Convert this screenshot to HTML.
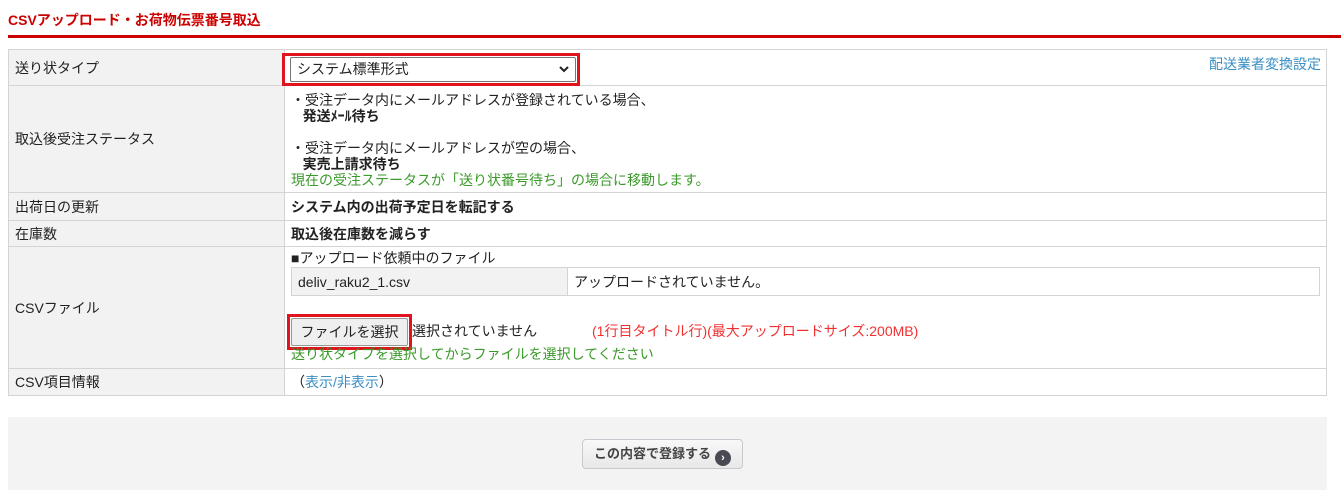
<!DOCTYPE html>
<html><head><meta charset="utf-8"><style>
*{margin:0;padding:0;box-sizing:border-box}
body{width:1341px;height:497px;background:#fff;font-family:"Liberation Sans","Noto Sans CJK JP",sans-serif;font-size:14px;color:#222;position:relative;overflow:hidden}
.a{position:absolute;white-space:nowrap}
.t{left:8px;top:10px;color:#c00;font-weight:bold;font-size:14px}
.rl{left:8px;top:35px;width:1333px;height:3px;background:#c00}
table{position:absolute;left:8px;top:49px;width:1319px;border-collapse:collapse}
td{border:1px solid #d4d4d4;vertical-align:middle;padding:0 6px}
td.l{background:#f2f2f2;width:276px}
.g{color:#3a9a2a}
.b{font-weight:bold}
.inner{border-collapse:collapse;width:100%;position:static}
.inner td{border:1px solid #d4d4d4;height:28px;padding:0 6px}
</style></head><body>
<div class="a t">CSVアップロード・お荷物伝票番号取込</div>
<div class="a rl"></div>
<table>
<tr style="height:36px"><td class="l">送り状タイプ</td><td style="position:relative">
<div class="a" style="left:-3px;top:3px;width:298px;height:33px;border:3px solid #e0141e"></div>
<div class="a" style="left:5px;top:7px;width:286px;height:25px;border:1px solid #767676;border-radius:2px;background:#fff;padding:0 6px;line-height:23px">システム標準形式<svg style="position:absolute;right:6px;top:8px" width="10" height="7" viewBox="0 0 10 7"><path d="M1 1l4 4 4-4" stroke="#222" stroke-width="2" fill="none"/></svg></div>
<div class="a" style="right:5px;top:4px;color:#3a8fc4">配送業者変換設定</div></td></tr>
<tr style="height:107px"><td class="l">取込後受注ステータス</td><td style="line-height:16px;padding-top:2px">
・受注データ内にメールアドレスが登録されている場合、<br>&nbsp;&nbsp;&nbsp;<span class="b">発送ﾒｰﾙ待ち</span><br><br>・受注データ内にメールアドレスが空の場合、<br>&nbsp;&nbsp;&nbsp;<span class="b">実売上請求待ち</span><br><span class="g">現在の受注ステータスが「送り状番号待ち」の場合に移動します。</span></td></tr>
<tr style="height:28px"><td class="l">出荷日の更新</td><td class="b">システム内の出荷予定日を転記する</td></tr>
<tr style="height:26px"><td class="l">在庫数</td><td class="b">取込後在庫数を減らす</td></tr>
<tr style="height:122px"><td class="l">CSVファイル</td><td style="position:relative;vertical-align:top">
<div style="margin-top:3px;line-height:17px">■アップロード依頼中のファイル</div>
<table class="inner"><tr><td style="background:#f2f2f2;width:276px">deliv_raku2_1.csv</td><td>アップロードされていません。</td></tr></table>
<div class="a" style="left:2px;top:67px;width:125px;height:36px;border:3px solid #e0141e"></div>
<div class="a" style="left:6px;top:71px;width:117px;height:28px;border:1px solid #999;border-radius:2px;background:#efefef;text-align:center;line-height:26px">ファイルを選択</div>
<div class="a" style="left:127px;top:74px">選択されていません</div>
<div class="a" style="left:307px;top:74px;color:#f03030">(1行目タイトル行)(最大アップロードサイズ:200MB)</div>
<div class="a g" style="left:6px;top:97px">送り状タイプを選択してからファイルを選択してください</div>
</td></tr>
<tr style="height:27px"><td class="l">CSV項目情報</td><td>（<span style="color:#3a8fc4">表示/非表示</span>）</td></tr>
</table>
<div class="a" style="left:8px;top:417px;width:1319px;height:73px;background:#f3f3f3"></div>
<div class="a" style="left:582px;top:439px;width:161px;height:30px;border:1px solid #c8c8d0;border-radius:4px;background:linear-gradient(#f8f8f8,#e8e8e8);font-weight:bold;color:#444;line-height:28px;padding-left:11px;font-size:13px">この内容で登録する<span style="display:inline-block;width:16px;height:16px;border-radius:50%;background:#4a4a55;color:#fff;font-size:11px;line-height:16px;text-align:center;margin-left:4px;vertical-align:-3px">›</span></div>
</body></html>
